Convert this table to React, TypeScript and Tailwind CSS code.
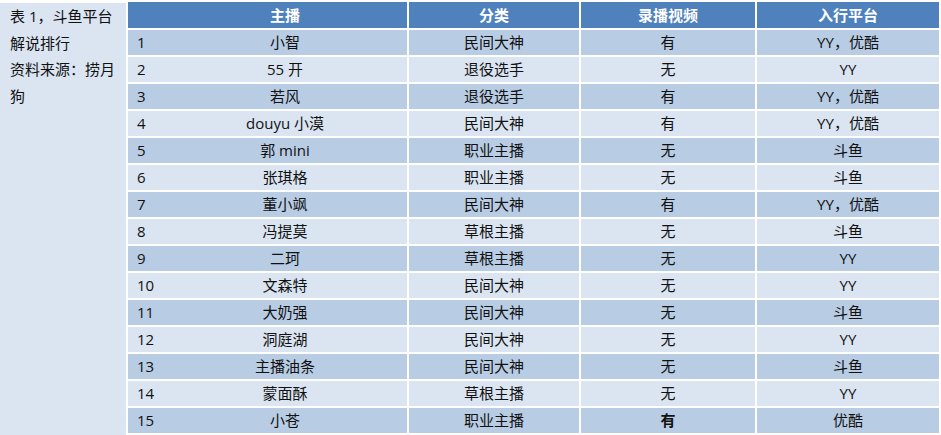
import React from "react";

type Row = {
  no: number;
  name: string;
  kind: string;
  video: string;
  platform: string;
  boldVideo?: boolean;
};

const rows: Row[] = [
  { no: 1, name: "小智", kind: "民间大神", video: "有", platform: "YY，优酷" },
  { no: 2, name: "55 开", kind: "退役选手", video: "无", platform: "YY" },
  { no: 3, name: "若风", kind: "退役选手", video: "有", platform: "YY，优酷" },
  { no: 4, name: "douyu 小漠", kind: "民间大神", video: "有", platform: "YY，优酷" },
  { no: 5, name: "郭 mini", kind: "职业主播", video: "无", platform: "斗鱼" },
  { no: 6, name: "张琪格", kind: "职业主播", video: "无", platform: "斗鱼" },
  { no: 7, name: "董小飒", kind: "民间大神", video: "有", platform: "YY，优酷" },
  { no: 8, name: "冯提莫", kind: "草根主播", video: "无", platform: "斗鱼" },
  { no: 9, name: "二珂", kind: "草根主播", video: "无", platform: "YY" },
  { no: 10, name: "文森特", kind: "民间大神", video: "无", platform: "YY" },
  { no: 11, name: "大奶强", kind: "民间大神", video: "无", platform: "斗鱼" },
  { no: 12, name: "洞庭湖", kind: "民间大神", video: "无", platform: "YY" },
  { no: 13, name: "主播油条", kind: "民间大神", video: "无", platform: "斗鱼" },
  { no: 14, name: "蒙面酥", kind: "草根主播", video: "无", platform: "YY" },
  { no: 15, name: "小苍", kind: "职业主播", video: "有", platform: "优酷", boldVideo: true },
];

const font = { fontFamily: '"Open Sans", "Noto Sans CJK SC", sans-serif' };

export default function App() {
  return (
    <div
      className="flex h-[435px] w-[941px] overflow-hidden bg-white text-[15px] text-[#111]"
      style={font}
    >
      {/* caption cell on the left */}
      <div className="mt-[3px] w-[126px] shrink-0 bg-[#dbe5f1] pl-[10px] pr-[4px] leading-[26.7px]">
        <div>表 1，斗鱼平台</div>
        <div>解说排行</div>
        <div>资料来源：捞月</div>
        <div>狗</div>
      </div>

      <div className="ml-[2px] mt-[2px] grid grid-cols-[279px_170px_174px_182px] auto-rows-[25px] grid-rows-[26px] gap-[2px]">
        <div className="flex items-center bg-[#4f81bd] font-bold text-white">
          <span className="w-[35px]" />
          <span className="flex-1 text-center">主播</span>
        </div>
        <div className="flex items-center justify-center bg-[#4f81bd] font-bold text-white">分类</div>
        <div className="flex items-center justify-center bg-[#4f81bd] font-bold text-white">录播视频</div>
        <div className="flex items-center justify-center bg-[#4f81bd] font-bold text-white">入行平台</div>

        {rows.map((r, i) => {
          const bg = i % 2 === 0 ? "bg-[#b8cce4]" : "bg-[#dbe5f1]";
          return (
            <React.Fragment key={r.no}>
              <div className={`flex items-center ${bg}`}>
                <span className="w-[35px] pl-[9px]">{r.no}</span>
                <span className="flex-1 text-center">{r.name}</span>
              </div>
              <div className={`flex items-center justify-center ${bg}`}>{r.kind}</div>
              <div className={`flex items-center justify-center ${bg} ${r.boldVideo ? "font-bold" : ""}`}>
                {r.video}
              </div>
              <div className={`flex items-center justify-center ${bg}`}>{r.platform}</div>
            </React.Fragment>
          );
        })}
      </div>
    </div>
  );
}
